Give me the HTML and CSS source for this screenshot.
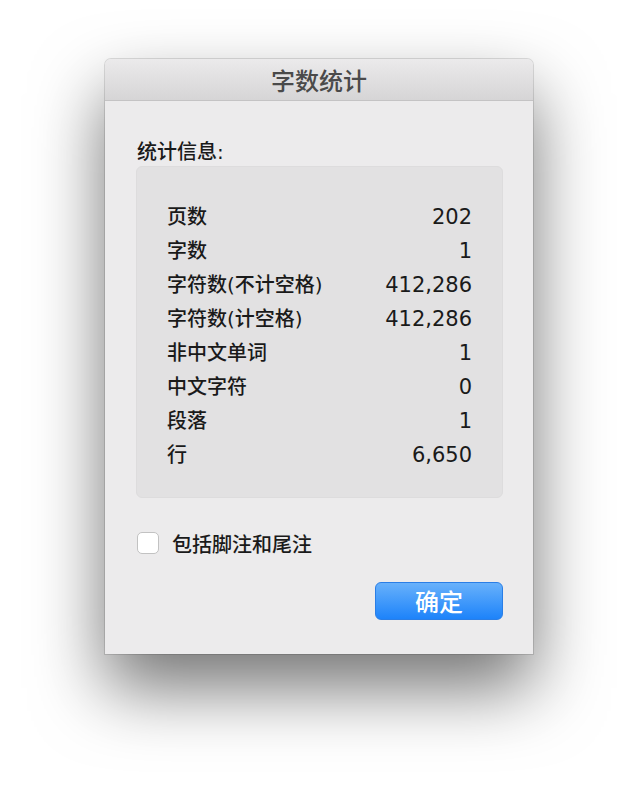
FILE: index.html
```html
<!DOCTYPE html>
<html lang="zh-CN">
<head>
    <meta charset="UTF-8">
    <meta name="viewport" content="width=device-width, initial-scale=1.0">
    <title>字数统计</title>
    <link rel="stylesheet" href="styles.css">
</head>
<body>
    <div class="dialog">
        <div class="titlebar">字数统计</div>

        <div class="content">
            <div class="heading">统计信息:</div>

            <div class="stats">
                <div class="row"><span>页数</span><span class="num">202</span></div>
                <div class="row"><span>字数</span><span class="num">1</span></div>
                <div class="row"><span>字符数(不计空格)</span><span class="num">412,286</span></div>
                <div class="row"><span>字符数(计空格)</span><span class="num">412,286</span></div>
                <div class="row"><span>非中文单词</span><span class="num">1</span></div>
                <div class="row"><span>中文字符</span><span class="num">0</span></div>
                <div class="row"><span>段落</span><span class="num">1</span></div>
                <div class="row"><span>行</span><span class="num">6,650</span></div>
            </div>

            <label class="check">
                <span class="box"></span>
                包括脚注和尾注
            </label>

            <div class="actions">
                <button class="ok">确定</button>
            </div>
        </div>
    </div>
</body>
</html>
```

FILE: styles.css
```css
html {
    height: 100%;
    background: #fff;
}
body {
    margin: 0;
    min-height: 100%;
    box-sizing: border-box;
    padding: 59px 0 0 105px;
    background: #fff;
    font-family: "DejaVu Sans", "Noto Sans CJK SC", sans-serif;
    color: #1a1a1a;
}
.dialog {
    width: 428px;
    background: #ecebec;
    border-radius: 6px 6px 0 0;
    box-shadow: 0 0 0 1px rgba(0, 0, 0, 0.12), 0 34px 70px rgba(0, 0, 0, 0.55);
}
.titlebar {
    height: 41px;
    line-height: 41px;
    text-align: center;
    font-family: "Noto Sans CJK SC", sans-serif;
    font-size: 24px;
    font-weight: 500;
    color: #4a4a4a;
    background: linear-gradient(#ebeaeb, #d6d5d6);
    border-bottom: 1px solid #c4c3c4;
    border-radius: 6px 6px 0 0;
}
.content {
    padding: 37px 30px 34px 31px;
}
.heading {
    font-size: 20px;
    font-weight: 500;
    line-height: 28px;
    padding-left: 1px;
}
.stats {
    background: #e2e1e2;
    border: 1px solid #dddcdd;
    border-radius: 6px;
    padding: 33px 30px 25px 30px;
}
.row {
    display: flex;
    justify-content: space-between;
    font-size: 20px;
    font-weight: 500;
    line-height: 34px;
}
.num {
    font-size: 21px;
    font-weight: 400;
}
.check {
    display: flex;
    align-items: center;
    gap: 13px;
    margin-top: 31px;
    height: 28px;
    font-size: 20px;
    font-weight: 500;
    padding-left: 1px;
}
.box {
    width: 20px;
    height: 20px;
    background: #fff;
    border: 1px solid #c2c2c2;
    border-radius: 5px;
}
.actions {
    display: flex;
    justify-content: flex-end;
    margin-top: 25px;
}
.ok {
    width: 128px;
    height: 38px;
    border: 1px solid #2a7ee6;
    border-radius: 6px;
    background: linear-gradient(#68b1fb, #1d83fa);
    color: #fff;
    font-family: "Noto Sans CJK SC", sans-serif;
    font-size: 24px;
    font-weight: 500;
    line-height: 34px;
    padding: 0;
}
```
